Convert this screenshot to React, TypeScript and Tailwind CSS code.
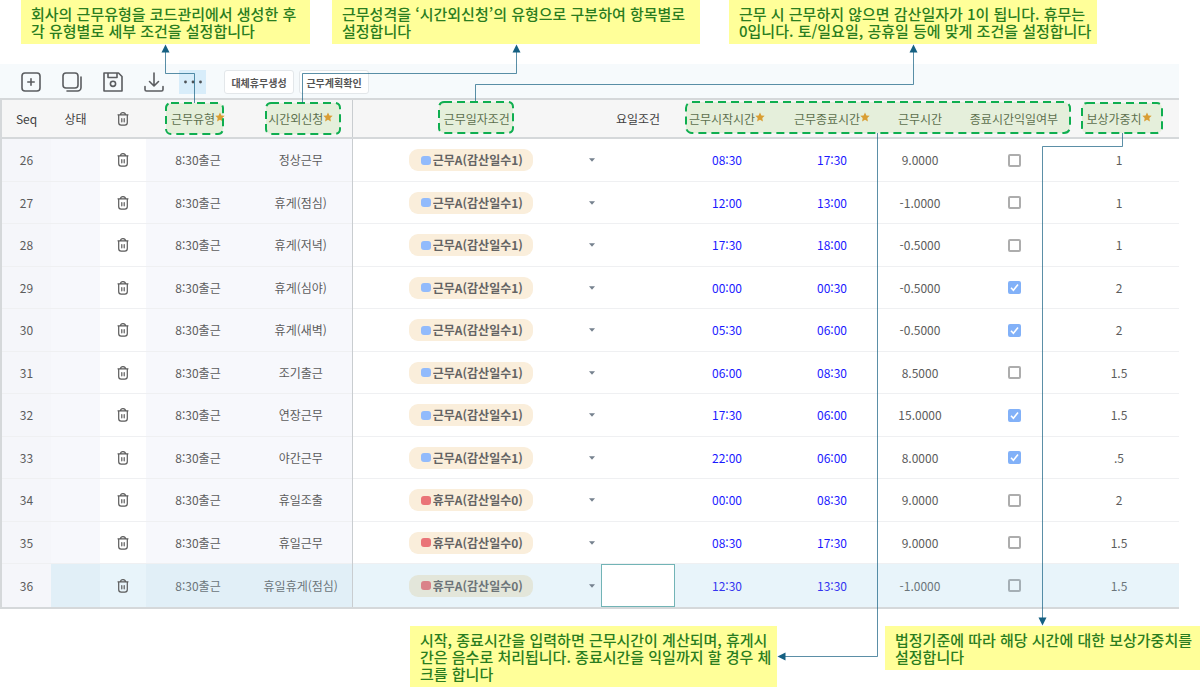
import React from "react";

type Row = {
  seq: number;
  kind: string;
  dayOff?: boolean;
  start: string;
  end: string;
  hours: string;
  nextDay: boolean;
  weight: string;
};

const rows: Row[] = [
  { seq: 26, kind: "정상근무", start: "08:30", end: "17:30", hours: "9.0000", nextDay: false, weight: "1" },
  { seq: 27, kind: "휴게(점심)", start: "12:00", end: "13:00", hours: "-1.0000", nextDay: false, weight: "1" },
  { seq: 28, kind: "휴게(저녁)", start: "17:30", end: "18:00", hours: "-0.5000", nextDay: false, weight: "1" },
  { seq: 29, kind: "휴게(심야)", start: "00:00", end: "00:30", hours: "-0.5000", nextDay: true, weight: "2" },
  { seq: 30, kind: "휴게(새벽)", start: "05:30", end: "06:00", hours: "-0.5000", nextDay: true, weight: "2" },
  { seq: 31, kind: "조기출근", start: "06:00", end: "08:30", hours: "8.5000", nextDay: false, weight: "1.5" },
  { seq: 32, kind: "연장근무", start: "17:30", end: "06:00", hours: "15.0000", nextDay: true, weight: "1.5" },
  { seq: 33, kind: "야간근무", start: "22:00", end: "06:00", hours: "8.0000", nextDay: true, weight: ".5" },
  { seq: 34, kind: "휴일조출", dayOff: true, start: "00:00", end: "08:30", hours: "9.0000", nextDay: false, weight: "2" },
  { seq: 35, kind: "휴일근무", dayOff: true, start: "08:30", end: "17:30", hours: "9.0000", nextDay: false, weight: "1.5" },
  { seq: 36, kind: "휴일휴게(점심)", dayOff: true, start: "12:30", end: "13:30", hours: "-1.0000", nextDay: false, weight: "1.5" },
];

const SELECTED = 36;

function Note({ className, children }: { className: string; children: React.ReactNode }) {
  return (
    <p className={`bg-[#ffff99] px-[10px] py-[5px] text-[15px] leading-[17px] font-medium whitespace-nowrap text-[#2a7d20] ${className}`}>
      {children}
    </p>
  );
}

function Trash() {
  return (
    <svg viewBox="0 0 12 14" className="mx-auto h-[14px] w-[12px]" fill="none" stroke="#5a5a5a" strokeWidth="1.2" strokeLinecap="round" aria-hidden="true">
      <path d="M1 2.8h10M3.6 2.6c0-1.2.7-1.9 2.4-1.9s2.4.7 2.4 1.9M1.7 3v7.6c0 1.7.9 2.6 2.5 2.6h3.6c1.6 0 2.5-.9 2.5-2.6V3" />
      <path d="M4.8 6.6v3.2M7.2 6.6v3.2" />
    </svg>
  );
}

function Star() {
  return (
    <svg viewBox="0 0 10 10" className="mb-[3px] h-[10px] w-[10px] shrink-0" fill="#e8952e" aria-hidden="true">
      <path d="M5 .4l1.4 3 3.3.4-2.4 2.3.6 3.3L5 7.8 2.1 9.4l.6-3.3L.3 3.8l3.3-.4z" />
    </svg>
  );
}

function Head({ label, required, strong, frozenEdge }: { label: string; required?: boolean; strong?: boolean; frozenEdge?: boolean }) {
  return (
    <th scope="col" className={`p-0 font-normal ${frozenEdge ? "border-r border-r-[#c9cdd0]" : ""}`}>
      <span className={`flex items-center justify-center whitespace-nowrap ${strong ? "text-[#3f3f3f]" : "text-[#545e4e]"}`}>
        {label}
        {required && <Star />}
      </span>
    </th>
  );
}

function ToolIcon({ label, className = "", children }: { label: string; className?: string; children: React.ReactNode }) {
  return (
    <button type="button" aria-label={label} className={`flex h-6 w-[27px] items-center justify-center ${className}`}>
      <svg viewBox="0 0 20 20" className="h-5 w-5" fill="none" stroke="#5b5d60" strokeWidth="1.6" strokeLinecap="round" strokeLinejoin="round" aria-hidden="true">
        {children}
      </svg>
    </button>
  );
}

function ToolButton({ children }: { children: React.ReactNode }) {
  return (
    <button type="button" className="h-6 w-[70px] rounded-[3px] border border-[#e3e7ea] bg-white text-[10px] font-bold whitespace-nowrap text-[#555]">
      {children}
    </button>
  );
}

function Toolbar() {
  return (
    <div className="flex h-[34px] items-center bg-[#f6fafc] pt-[2px] pl-[17px]">
      <div className="flex gap-[14px]">
        <ToolIcon label="추가">
          <rect x="1" y="1" width="18" height="18" rx="3" />
          <path d="M10 6.8v6.4M6.8 10h6.4" />
        </ToolIcon>
        <ToolIcon label="복사">
          <rect x="1" y="1" width="15" height="15" rx="3" />
          <path d="M19 5v10.5a3.500 3.500 0 0 1-3.500 3.500H5" />
        </ToolIcon>
        <ToolIcon label="저장">
          <path d="M1 1h14.5L19 4.5V19H1zM5 1v4.5h9V1" />
          <circle cx="10" cy="11.8" r="2.6" />
        </ToolIcon>
        <ToolIcon label="내려받기">
          <path d="M10 1v12.5M5.5 9.5L10 14l4.500-4.500M1 14.5v3A1.500 1.500 0 0 0 2.500 19h15a1.500 1.500 0 0 0 1.500-1.500v-3" />
        </ToolIcon>
      </div>
      <ToolIcon label="더보기" className="ml-3 bg-[#d8edfa]">
        <g fill="#4d5256" stroke="none">
          <circle cx="2.5" cy="10" r="1.4" />
          <circle cx="10" cy="10" r="1.4" />
          <circle cx="17.5" cy="10" r="1.4" />
        </g>
      </ToolIcon>
      <div className="ml-[18px] flex gap-[5px]">
        <ToolButton>대체휴무생성</ToolButton>
        <ToolButton>근무계획확인</ToolButton>
      </div>
    </div>
  );
}

function ConditionCell({ row, selected }: { row: Row; selected: boolean }) {
  return (
    <div className="flex items-center">
      <div className="flex flex-1 justify-center">
        <span className={`flex h-[22px] w-[124px] items-center gap-[2px] rounded-[9px] pl-3 ${selected ? "bg-[#e3e6da]" : "bg-[#faeedb]"}`}>
          <span className={`h-[9px] w-[10px] shrink-0 rounded-[3px] ${row.dayOff ? (selected ? "bg-[#da8289]" : "bg-[#ea7478]") : "bg-[#92bbfc]"}`} />
          <select
            aria-label={`${row.seq} 근무일자조건`}
            defaultValue={row.dayOff ? "off" : "on"}
            className={`appearance-none bg-transparent p-0 text-xs font-bold outline-none ${selected ? "text-[#6c7478]" : "text-[#636363]"}`}
          >
            <option value="on">근무A(감산일수1)</option>
            <option value="off">휴무A(감산일수0)</option>
          </select>
        </span>
      </div>
      <svg viewBox="0 0 6 4" className="mr-[6px] h-1 w-[6px]" fill="#75818e" aria-hidden="true">
        <path d="M0 .3h6L3 3.8z" />
      </svg>
    </div>
  );
}

function Check({ row, selected }: { row: Row; selected: boolean }) {
  return (
    <span className="relative mx-auto flex h-[13px] w-[13px]">
      <input
        type="checkbox"
        aria-label={`${row.seq} 종료시간익일여부`}
        defaultChecked={row.nextDay}
        className={`peer h-[13px] w-[13px] appearance-none rounded-[2px] border-2 checked:border-[#82b1f8] checked:bg-[#82b1f8] ${selected ? "border-[#a5afb5]" : "border-[#adadad]"}`}
      />
      <svg viewBox="0 0 13 13" className="pointer-events-none absolute inset-0 hidden peer-checked:block" fill="none" stroke="#fff" strokeWidth="1.6" aria-hidden="true">
        <path d="M3 6.8l2.400 2.500L10 3.600" />
      </svg>
    </span>
  );
}

function Grid() {
  return (
    <table className="w-full table-fixed border-collapse border-y-2 border-l-2 border-[#d5d8da] text-center text-xs">
      <colgroup>
        <col className="w-[50px]" />
        <col className="w-[49px]" />
        <col className="w-[46px]" />
        <col className="w-[104px]" />
        <col className="w-[102px]" />
        <col className="w-[249px]" />
        <col className="w-[74px]" />
        <col className="w-[104px]" />
        <col className="w-[106px]" />
        <col className="w-[70px]" />
        <col className="w-[118px]" />
        <col className="w-[92px]" />
        <col />
      </colgroup>
      <thead>
        <tr className="h-[39px] border-b-2 border-[#d5d8da] bg-[#f6f6f6]">
          <Head label="Seq" strong />
          <Head label="상태" strong />
          <th scope="col" className="p-0" aria-label="삭제"><Trash /></th>
          <Head label="근무유형" required />
          <Head label="시간외신청" required frozenEdge />
          <Head label="근무일자조건" />
          <Head label="요일조건" strong />
          <Head label="근무시작시간" required />
          <Head label="근무종료시간" required />
          <Head label="근무시간" />
          <Head label="종료시간익일여부" />
          <Head label="보상가중치" required />
          <th className="p-0" />
        </tr>
      </thead>
      <tbody>
        {rows.map((row) => {
          const selected = row.seq === SELECTED;
          const tint = selected ? "bg-[#e1eff7]" : "bg-[#f7f8fc]";
          const plain = selected ? "bg-[#e8f4fa]" : "bg-white";
          const time = selected ? "text-[#3434f0]" : "text-[#1a1aff]";
          return (
            <tr key={row.seq} className={`border-b border-[#eff0f2] odd:h-[43px] even:h-[42px] ${selected ? "text-[#6b757a]" : "text-[#5c5c5c]"}`}>
              <td className="bg-[#f5f6fa] p-0 pt-px text-[#5c5c5c]">{row.seq}</td>
              <td className={`p-0 ${tint}`} />
              <td className={`p-0 pt-px ${plain}`}>
                <button type="button" aria-label={`${row.seq} 삭제`} className="block w-full">
                  <Trash />
                </button>
              </td>
              <td className={`p-0 pt-px ${tint}`}>8:30출근</td>
              <td className={`border-r border-r-[#c9cdd0] p-0 pt-px ${tint}`}>{row.kind}</td>
              <td className={`p-0 pt-px ${plain}`}><ConditionCell row={row} selected={selected} /></td>
              <td className={`p-0 ${plain}`}>
                {selected && (
                  <input type="text" aria-label={`${row.seq} 요일조건`} className="block h-[43px] w-full border border-[#72b4b6] bg-white px-2 outline-none" />
                )}
              </td>
              <td className={`p-0 pt-px ${plain} ${time}`}>{row.start}</td>
              <td className={`p-0 pt-px ${plain} ${time}`}>{row.end}</td>
              <td className={`p-0 pt-px ${plain}`}>{row.hours}</td>
              <td className={`p-0 pt-px ${plain}`}><Check row={row} selected={selected} /></td>
              <td className={`p-0 pt-px ${plain}`}>{row.weight}</td>
              <td className={`p-0 ${plain}`} />
            </tr>
          );
        })}
      </tbody>
    </table>
  );
}

/* Highlight frames and the arrows that tie each one to its note. */
function Connectors() {
  return (
    <svg viewBox="0 0 1200 691" className="pointer-events-none absolute top-0 left-0 h-[691px] w-[1200px]" fill="none" aria-hidden="true">
      <g stroke="#0fae50" strokeWidth="2" strokeDasharray="8 5" fill="#92d050" fillOpacity="0.16">
        <rect x="166" y="103" width="57" height="31" rx="5" />
        <rect x="266" y="103" width="74" height="31" rx="5" />
        <rect x="439" y="102" width="74" height="31" rx="5" />
        <rect x="686" y="102" width="384" height="31" rx="6" />
        <rect x="1082" y="103" width="80" height="30" rx="5" />
      </g>
      <g stroke="#156082" strokeOpacity="0.7" strokeWidth="1">
        <path d="M165.5 52V73.5H194.5V103" />
        <path d="M516.5 52V73.5H302.5V103" />
        <path d="M913.5 52V84.5H475.5V101" />
        <path d="M877.5 133V656.5H785" />
        <path d="M1122.5 133V146.5H1042.5V618" />
      </g>
      <g fill="#156082">
        <path d="M165.5 44.500l4 8h-8z" />
        <path d="M516.5 44.500l4 8h-8z" />
        <path d="M913.5 44.500l4 8h-8z" />
        <path d="M777.5 656.500l8-4v8z" />
        <path d="M1042.5 625.500l4-8h-8z" />
      </g>
    </svg>
  );
}

export default function App() {
  return (
    <div lang="ko" className="relative overflow-hidden bg-white pb-1 font-['Noto_Sans_CJK_KR','Noto_Sans',sans-serif]">
      <div className="flex items-start pl-[21px]">
        <Note className="w-[289px] shrink-0">
          회사의 근무유형을 코드관리에서 생성한 후<br />각 유형별로 세부 조건을 설정합니다
        </Note>
        <Note className="ml-[22px] w-[368px] shrink-0">
          근무성격을 ‘시간외신청’의 유형으로 구분하여 항목별로<br />설정합니다
        </Note>
        <Note className="ml-[29px] w-[368px] shrink-0">
          근무 시 근무하지 않으면 감산일자가 1이 됩니다. 휴무는<br />0입니다. 토/일요일, 공휴일 등에 맞게 조건을 설정합니다
        </Note>
      </div>
      <main className="mt-5 mr-[21px]">
        <Toolbar />
        <Grid />
      </main>
      <div className="mt-[17px] flex items-start pl-[410px]">
        <Note className="w-[367px] shrink-0">
          시작, 종료시간을 입력하면 근무시간이 계산되며, 휴게시<br />간은 음수로 처리됩니다. 종료시간을 익일까지 할 경우 체<br />크를 합니다
        </Note>
        <Note className="ml-[108px] w-[315px] shrink-0">
          법정기준에 따라 해당 시간에 대한 보상가중치를<br />설정합니다
        </Note>
      </div>
      <Connectors />
    </div>
  );
}
